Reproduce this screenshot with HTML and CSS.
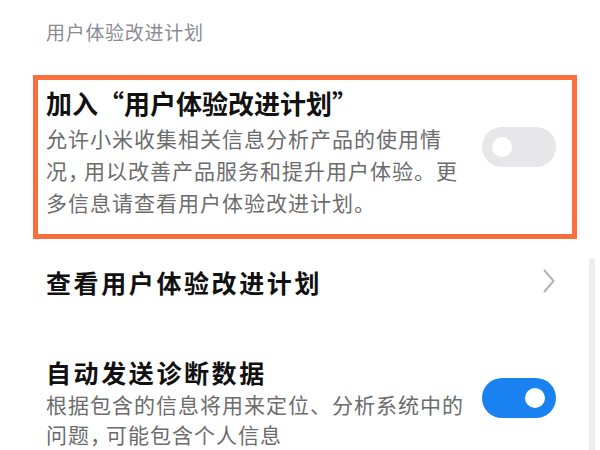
FILE: index.html
```html
<!DOCTYPE html>
<html lang="zh-CN">
<head>
<meta charset="utf-8">
<link rel="stylesheet" href="styles.css">
</head>
<body>
<div class="page">
  <div class="section-title">用户体验改进计划</div>
  <div class="highlight">
    <div class="row">
      <div class="text">
        <div class="title">加入“用户体验改进计划”</div>
        <div class="desc">允许小米收集相关信息分析产品的使用情<br>况<span class="pc">，</span>用以改善产品服务和提升用户体验。更<br>多信息请查看用户体验改进计划。</div>
      </div>
      <div class="switch off"><span class="knob"></span></div>
    </div>
  </div>
  <div class="item link">
    <div class="item-title">查看用户体验改进计划</div>
    <svg class="chevron" width="12" height="24" viewBox="0 0 12 24"><polyline points="1.5,1.5 10.5,12 1.5,22.5" fill="none" stroke="#b3b3b3" stroke-width="2" stroke-linecap="round" stroke-linejoin="round"/></svg>
  </div>
  <div class="item">
    <div class="text">
      <div class="item-title">自动发送诊断数据</div>
      <div class="desc small">根据包含的信息将用来定位、分析系统中的<br>问题<span class="pc">，</span>可能包含个人信息</div>
    </div>
    <div class="switch on"><span class="knob"></span></div>
  </div>
  <div class="scrollbar"></div>
</div>
</body>
</html>
```

FILE: styles.css
```css
* { box-sizing: border-box; }
html, body { margin: 0; padding: 0; background: #fff; }
body {
  font-family: "Noto Sans CJK SC", "Noto Sans", sans-serif;
  color: #111;
}
.page {
  position: relative;
  width: 600px;
  height: 450px;
  overflow: hidden;
}
.section-title {
  padding: 19px 0 0 46px;
  height: 75px;
  font-size: 19px;
  line-height: 26px;
  letter-spacing: 0.7px;
  color: #8b8b94;
}
.highlight {
  margin-left: 33px;
  width: 544px;
  height: 164px;
  border: 5px solid #fb6f3f;
  padding: 6px 16px 0 8px;
}
.row {
  display: flex;
  align-items: center;
}
.text { flex: 1; }
.title {
  font-size: 26px;
  line-height: 34px;
  font-weight: 700;
  color: #111;
}
.desc {
  margin-top: 2px;
  font-size: 21px;
  line-height: 32px;
  letter-spacing: 1px;
  color: #6c6c6c;
}
.desc.small { margin-top: 0; line-height: 30px; }
.pc { letter-spacing: -5px; }
.switch {
  width: 74px;
  height: 40px;
  border-radius: 20px;
  display: flex;
  align-items: center;
  padding: 0 10px;
  flex-shrink: 0;
}
.switch .knob {
  width: 20px;
  height: 20px;
  border-radius: 50%;
  background: #fff;
}
.switch.off { background: #e7e7e9; margin-bottom: 10px; }
.switch.on { background: #1a82f0; justify-content: flex-end; padding-right: 11px; margin-bottom: 8px; }
.item {
  display: flex;
  align-items: center;
  padding: 0 44px 0 46px;
}
.item.link {
  height: 86px;
  padding-top: 0;
}
.item-title {
  flex: 1;
  font-size: 25px;
  line-height: 34px;
  letter-spacing: 2.6px;
  font-weight: 700;
  color: #111;
}
.chevron { margin-right: 1px; margin-top: -2px; }
.item:not(.link) { padding-top: 30px; }
.scrollbar {
  position: absolute;
  left: 589px;
  top: 258px;
  width: 6px;
  height: 200px;
  border-radius: 3px;
  background: #eeeeee;
}
```
